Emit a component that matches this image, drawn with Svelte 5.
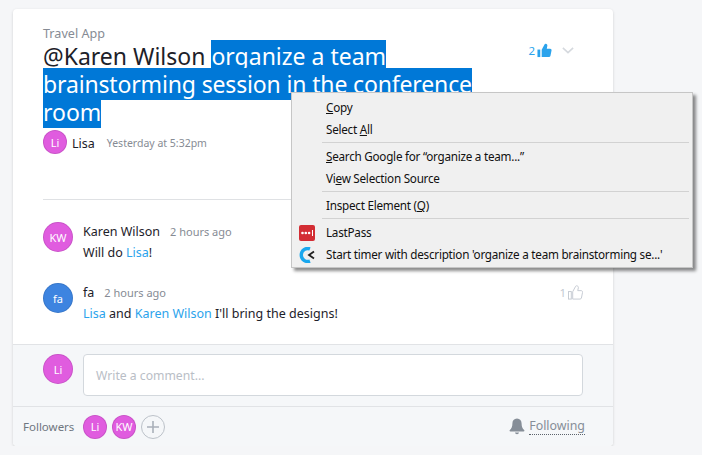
<script>
const menu = [
  [{ pre: '', key: 'C', post: 'opy' }, { pre: 'Select ', key: 'A', post: 'll' }],
  [{ pre: '', key: 'S', post: 'earch Google for “organize a team...”' }, { pre: 'Vi', key: 'e', post: 'w Selection Source' }],
  [{ pre: 'Inspect Element (', key: 'Q', post: ')' }],
  [{ pre: 'LastPass', icon: 'lastpass' }, { pre: "Start timer with description 'organize a team brainstorming se...'", icon: 'toggl' }],
];
const thumb = 'M5 7.2 8 1.6c.4-.8 1.3-1 2-.6.8.4 1.2 1.2 1 2.1L10.4 6H14c1 0 1.7.9 1.5 1.9l-1.2 6c-.2.7-.8 1.1-1.5 1.1H5z';
</script>

<div class="card">
  <section class="head">
    <div class="head-top">
      <div class="title-col">
        <div class="app-name">Travel App</div>
        <h1>@Karen Wilson <span class="sel">organize a team </span><br /><span class="sel tight">brainstorming session in the conference </span><br /><span class="sel">room</span></h1>
      </div>
      <div class="actions">
        <span class="count">2</span>
        <svg width="15" height="15" viewBox="0 0 16 16"><rect x="0.5" y="7" width="3" height="8" fill="#2ba3ec" /><path d={thumb} fill="#2ba3ec" /></svg>
        <svg class="chev" width="12" height="7" viewBox="0 0 14 8"><path d="M1 1l6 5.500L13 1" fill="none" stroke="#d5d9de" stroke-width="1.800" /></svg>
      </div>
    </div>
    <div class="author">
      <span class="avatar small pink">Li</span>
      <span class="author-name">Lisa</span>
      <span class="when">Yesterday at 5:32pm</span>
    </div>
  </section>

  <section class="comments">
    <div class="comment">
      <span class="avatar pink">KW</span>
      <div class="body">
        <div class="meta"><span class="name">Karen Wilson</span><span class="when big">2 hours ago</span></div>
        <div class="text">Will do <span class="mention">Lisa</span>!</div>
      </div>
    </div>
    <div class="comment">
      <span class="avatar blue">fa</span>
      <div class="body">
        <div class="meta"><span class="name">fa</span><span class="when big">2 hours ago</span></div>
        <div class="text"><span class="mention">Lisa</span> and <span class="mention">Karen Wilson</span> I'll bring the designs!</div>
      </div>
      <div class="like">
        <span>1</span>
        <svg width="15" height="15" viewBox="0 0 16 16" fill="none" stroke="#c3c9d1" stroke-width="1"><rect x="0.5" y="7" width="3" height="8" /><path d={thumb} /></svg>
      </div>
    </div>
  </section>

  <section class="reply">
    <span class="avatar pink">Li</span>
    <div class="input">Write a comment...</div>
  </section>

  <footer>
    <span class="followers">Followers</span>
    <span class="avatar small pink">Li</span>
    <span class="avatar small pink">KW</span>
    <span class="add">
      <svg width="14" height="14" viewBox="0 0 14 14"><path d="M7 1v12M1 7h12" stroke="#a9b0b9" stroke-width="1.600" /></svg>
    </span>
    <span class="following">
      <svg width="16" height="17" viewBox="0 0 16 17"><path d="M8 0.5c-3 0-4.600 2.200-4.600 5 0 3.600-1 5.200-2.600 6.600-.5.5-.2 1.400.6 1.400h13.200c.8 0 1.100-.9.600-1.400C13.600 10.700 12.600 9.100 12.600 5.500c0-2.800-1.600-5-4.600-5zM6 14.500c.2 1 1 1.700 2 1.700s1.800-.7 2-1.700z" fill="#868e98" /></svg>
      <span class="following-text">Following</span>
    </span>
  </footer>
</div>

<div class="menu">
  {#each menu as group, i}
    {#if i > 0}<div class="sep"></div>{/if}
    {#each group as item}
      <div class="item">
        {#if item.icon === 'lastpass'}
          <svg class="ico" width="16" height="16" viewBox="0 0 16 16">
            <rect width="16" height="16" rx="2" fill="#d32d34" />
            <circle cx="3.500" cy="8" r="1.300" fill="#fff" /><circle cx="6.800" cy="8" r="1.300" fill="#fff" /><circle cx="10.100" cy="8" r="1.300" fill="#fff" />
            <rect x="13" y="5" width="1" height="6" fill="#fff" />
          </svg>
        {:else if item.icon === 'toggl'}
          <svg class="ico" width="16" height="16" viewBox="0 0 16 16">
            <path d="M11 1.900A6.500 6.500 0 1 0 11 14.100" fill="none" stroke="#19a7ee" stroke-width="3.400" />
            <path d="M15 4.500 10 8l5 3.500" fill="none" stroke="#222" stroke-width="1.800" />
          </svg>
        {/if}
        <span>{item.pre}{#if item.key}<u>{item.key}</u>{item.post}{/if}</span>
      </div>
    {/each}
  {/each}
</div>

<style>
:global(body) {
  margin: 0;
  background: #f5f6f8;
  font-family: "Noto Sans", "Open Sans", sans-serif;
  color: #1d2129;
}
.card {
  position: relative;
  box-sizing: border-box;
  width: 600px;
  height: 437px;
  margin: 9px 0 0 13px;
  background: #fff;
  border-radius: 4px;
  box-shadow: 0 1px 3px rgba(0, 0, 0, 0.16);
  display: flex;
  flex-direction: column;
  overflow: hidden;
}
.head {
  box-sizing: border-box;
  height: 191px;
  margin: 0 30px;
  padding-top: 16px;
  border-bottom: 1px solid #dfe1e4;
}
.head-top {
  display: flex;
  justify-content: space-between;
}
.app-name {
  font-size: 12.600px;
  line-height: 18px;
  color: #868b94;
}
h1 {
  margin: -1px 0 0;
  font-weight: 400;
  font-size: 23px;
  line-height: 28px;
  white-space: pre;
}
.sel {
  background: #0078d7;
  color: #fff;
}
.tight {
  letter-spacing: -0.15px;
}
.actions {
  display: flex;
  align-items: center;
  height: 18px;
  margin-top: 16px;
  gap: 2px;
}
.count {
  font-size: 11.500px;
  color: #2ba3ec;
}
.chev {
  margin-left: 8px;
  margin-right: 9px;
}
.author {
  display: flex;
  align-items: center;
  margin-top: 4px;
}
.avatar {
  flex: none;
  box-sizing: border-box;
  width: 30px;
  height: 30px;
  border-radius: 50%;
  display: inline-flex;
  align-items: center;
  justify-content: center;
  font-size: 11px;
  color: #fff;
  border: 1px solid rgba(0, 0, 0, 0.1);
}
.avatar.small {
  width: 24px;
  height: 24px;
}
.pink {
  background: #e05cdf;
}
.blue {
  background: #3d84e0;
}
.author-name {
  font-size: 12.500px;
  margin-left: 5px;
  padding-top: 2px;
}
.when {
  font-size: 10.500px;
  color: #868b94;
  margin-left: 12px;
  padding-top: 2px;
}
.when.big {
  font-size: 11px;
  margin-left: 10px;
  padding-top: 0;
}
.comments {
  flex: 1;
  padding: 22px 30px 0;
}
.comment {
  display: flex;
  gap: 10px;
  height: 61px;
}
.body {
  flex: 1;
}
.meta {
  display: flex;
  align-items: baseline;
  line-height: 20px;
}
.name {
  font-size: 12.500px;
}
.text {
  font-size: 12.500px;
  line-height: 22px;
}
.mention {
  color: #2ba3ec;
}
.like {
  display: flex;
  align-items: center;
  gap: 2px;
  height: 18px;
  font-size: 11.500px;
  color: #c3c9d1;
}
.reply {
  box-sizing: border-box;
  height: 62px;
  padding: 9px 30px 0;
  display: flex;
  gap: 10px;
  background: #f5f7f9;
  border-top: 1px solid #e1e3e6;
}
.input {
  box-sizing: border-box;
  flex: 1;
  height: 42px;
  padding: 0 12px;
  display: flex;
  align-items: center;
  font-size: 12.200px;
  color: #b9bec6;
  background: #fff;
  border: 1px solid #d3d8dd;
  border-radius: 4px;
}
footer {
  box-sizing: border-box;
  height: 40px;
  padding: 0 28px 0 10px;
  display: flex;
  align-items: center;
  gap: 5px;
  background: #f5f7f9;
  border-top: 1px solid #e1e3e6;
}
.followers {
  font-size: 11.500px;
  color: #6f7680;
  width: 55px;
}
.add {
  box-sizing: border-box;
  width: 24px;
  height: 24px;
  border-radius: 50%;
  border: 1px solid #bcc2c9;
  display: inline-flex;
  align-items: center;
  justify-content: center;
}
.following {
  margin-left: auto;
  display: flex;
  align-items: center;
  gap: 4px;
}
.following-text {
  font-size: 12.400px;
  line-height: 16px;
  color: #868e98;
  border-bottom: 1px dotted #5c636c;
}
.menu {
  position: absolute;
  left: 291px;
  top: 92px;
  box-sizing: border-box;
  width: 402px;
  height: 176px;
  padding: 4px 2px 2px;
  background: #f0f0f0;
  border: 1px solid #c6c6c6;
  box-shadow: 3px 3px 3px rgba(0, 0, 0, 0.45);
  font-size: 11.700px;
  letter-spacing: -0.25px;
  color: #111;
}
.item {
  position: relative;
  height: 22px;
  line-height: 20px;
  padding-left: 32px;
  white-space: nowrap;
}
.ico {
  position: absolute;
  left: 5px;
  top: 3px;
}
.sep {
  height: 1px;
  margin: 1px 1px 3px 28px;
  background: #d2d2d2;
}
</style>
